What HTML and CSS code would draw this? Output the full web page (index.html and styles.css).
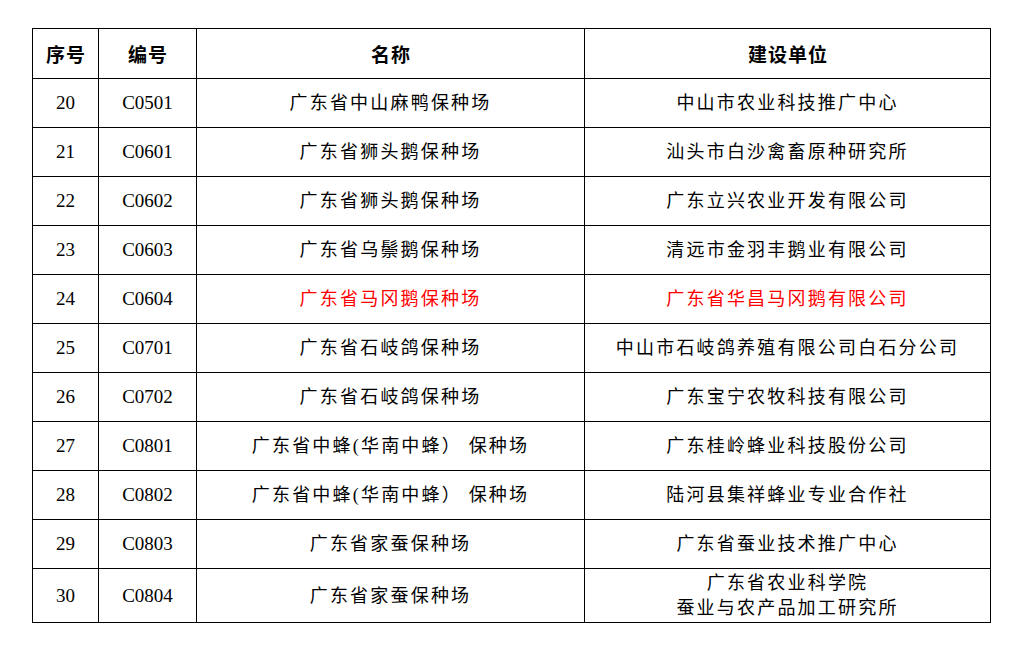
FILE: index.html
```html
<!DOCTYPE html>
<html lang="zh-CN">
<head>
<meta charset="utf-8">
<link rel="stylesheet" href="styles.css">
</head>
<body>
<table class="tbl">
  <colgroup>
    <col class="c1"><col class="c2"><col class="c3"><col class="c4">
  </colgroup>
  <thead>
    <tr class="head"><th>序号</th><th>编号</th><th>名称</th><th>建设单位</th></tr>
  </thead>
  <tbody>
    <tr><td class="num">20</td><td class="num">C0501</td><td class="zh">广东省中山麻鸭保种场</td><td class="zh">中山市农业科技推广中心</td></tr>
    <tr><td class="num">21</td><td class="num">C0601</td><td class="zh">广东省狮头鹅保种场</td><td class="zh">汕头市白沙禽畜原种研究所</td></tr>
    <tr><td class="num">22</td><td class="num">C0602</td><td class="zh">广东省狮头鹅保种场</td><td class="zh">广东立兴农业开发有限公司</td></tr>
    <tr><td class="num">23</td><td class="num">C0603</td><td class="zh">广东省乌鬃鹅保种场</td><td class="zh">清远市金羽丰鹅业有限公司</td></tr>
    <tr><td class="num">24</td><td class="num">C0604</td><td class="zh red">广东省马冈鹅保种场</td><td class="zh red">广东省华昌马冈鹅有限公司</td></tr>
    <tr><td class="num">25</td><td class="num">C0701</td><td class="zh">广东省石岐鸽保种场</td><td class="zh">中山市石岐鸽养殖有限公司白石分公司</td></tr>
    <tr><td class="num">26</td><td class="num">C0702</td><td class="zh">广东省石岐鸽保种场</td><td class="zh">广东宝宁农牧科技有限公司</td></tr>
    <tr><td class="num">27</td><td class="num">C0801</td><td class="zh">广东省中蜂(华南中蜂） 保种场</td><td class="zh">广东桂岭蜂业科技股份公司</td></tr>
    <tr><td class="num">28</td><td class="num">C0802</td><td class="zh">广东省中蜂(华南中蜂） 保种场</td><td class="zh">陆河县集祥蜂业专业合作社</td></tr>
    <tr><td class="num">29</td><td class="num">C0803</td><td class="zh">广东省家蚕保种场</td><td class="zh">广东省蚕业技术推广中心</td></tr>
    <tr class="last"><td class="num">30</td><td class="num">C0804</td><td class="zh">广东省家蚕保种场</td><td class="zh two">广东省农业科学院<br>蚕业与农产品加工研究所</td></tr>
  </tbody>
</table>
</body>
</html>
```
FILE: styles.css
```css
html, body {
  margin: 0;
  padding: 0;
  background: #fff;
}
body {
  padding: 28px 0 0 32px;
  font-family: "Liberation Serif", "Noto Sans CJK SC", serif;
  color: #000;
}
.tbl {
  border-collapse: collapse;
  table-layout: fixed;
  width: 958px;
}
.c1 { width: 66px; }
.c2 { width: 98px; }
.c3 { width: 388px; }
.c4 { width: 406px; }
.tbl th, .tbl td {
  border: 1px solid #000;
  padding: 0;
  text-align: center;
  vertical-align: middle;
  font-weight: normal;
}
.head { height: 50px; }
.tbl th {
  font-family: "Noto Sans CJK SC", sans-serif;
  font-weight: 700;
  font-size: 19px;
  letter-spacing: 1px;
  line-height: 22px;
  padding-left: 1px;
}
tbody tr { height: 49px; }
tbody tr.last { height: 54px; }
.num {
  font-size: 19px;
  line-height: 20px;
}
.zh {
  font-family: "Liberation Serif", "Noto Sans CJK SC", serif;
  font-size: 18px;
  letter-spacing: 2.2px;
  line-height: 22px;
  padding-left: 2px;
  font-weight: 300;
}
.two { line-height: 25px; }
.red { color: #ff0000; }
```
